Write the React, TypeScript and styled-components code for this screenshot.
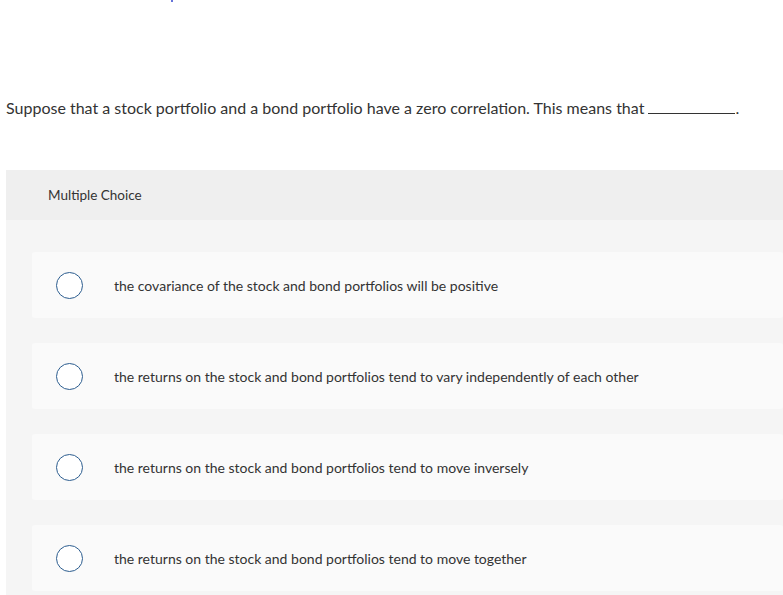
import React from 'react';
import { styled, createGlobalStyle } from 'styled-components';

const options = [
    'the covariance of the stock and bond portfolios will be positive',
    'the returns on the stock and bond portfolios tend to vary independently of each other',
    'the returns on the stock and bond portfolios tend to move inversely',
    'the returns on the stock and bond portfolios tend to move together',
];

function App() {
    return (
        <Page>
            <GlobalStyle />
            <TopDot />
            <Question>
                Suppose that a stock portfolio and a bond portfolio have a zero correlation. This means that
                <Blank />.
            </Question>
            <Panel>
                <PanelHeader>Multiple Choice</PanelHeader>
                <Choices>
                    {options.map((text) => (
                        <Choice key={text}>
                            <Radio />
                            <ChoiceText>{text}</ChoiceText>
                        </Choice>
                    ))}
                </Choices>
            </Panel>
        </Page>
    );
}

export default App;

const GlobalStyle = createGlobalStyle`
    body{
        margin: 0;
        background: #fff;
        font-family: Lato, "Open Sans", sans-serif;
        color: #333;
    }
`;

const Page = styled.div`
    width: 783px;
    height: 595px;
    overflow: hidden;
`;

const TopDot = styled.div`
    width: 2px;
    height: 2px;
    margin-left: 171px;
    background: #3344cc;
    border-radius: 50%;
`;

const Question = styled.p`
    margin: 96px 0 0 6px;
    font-size: 16px;
    line-height: 20px;
    white-space: nowrap;
`;

const Blank = styled.span`
    display: inline-block;
    width: 87px;
    height: 15px;
    margin-left: 4px;
    border-bottom: 1px solid #333;
`;

const Panel = styled.div`
    margin: 52px 0 0 6px;
    background: #f5f5f5;
`;

const PanelHeader = styled.div`
    height: 50px;
    display: flex;
    align-items: center;
    padding-left: 42px;
    background: #efefef;
    font-size: 13.5px;
    color: #333;
`;

const Choices = styled.div`
    display: flex;
    flex-direction: column;
    gap: 25px;
    padding: 32px 0 40px 26px;
`;

const Choice = styled.div`
    height: 66px;
    display: flex;
    align-items: center;
    padding-left: 24px;
    background: #fafafa;
    border-radius: 3px;
`;

const Radio = styled.span`
    width: 25px;
    height: 25px;
    border: 1.5px solid #2c5d8f;
    border-radius: 50%;
    background: #fff;
    flex-shrink: 0;
`;

const ChoiceText = styled.span`
    margin-left: 31px;
    font-size: 14px;
    color: #333;
`;
